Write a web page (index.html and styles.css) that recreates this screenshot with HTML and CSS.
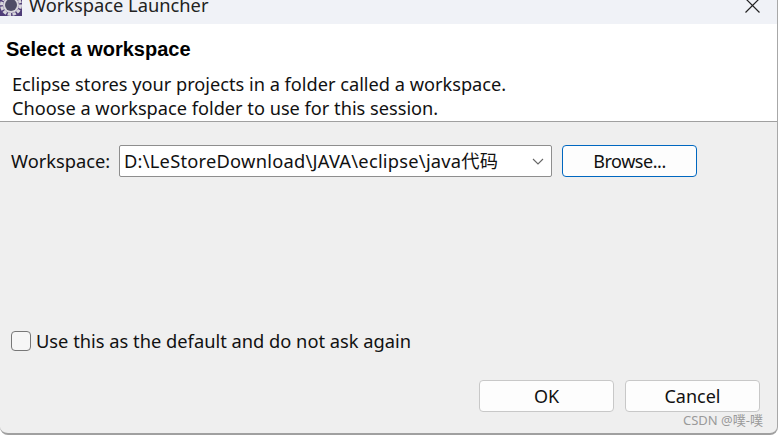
FILE: index.html
```html
<!DOCTYPE html>
<html lang="en">
<head>
    <meta charset="UTF-8">
    <title>Workspace Launcher</title>
    <link rel="stylesheet" href="styles.css">
</head>
<body>
    <div class="window">
        <div class="titlebar">
            <svg class="app-icon" width="22" height="22" viewBox="0 0 22 22">
                <rect width="22" height="22" fill="#4f3d78"/>
                <circle cx="11" cy="11" r="9.5" fill="none" stroke="#d8d6dc" stroke-width="3" stroke-dasharray="3.5 1.4"/>
                <circle cx="11" cy="11" r="8" fill="#d8d6dc"/>
                <circle cx="11" cy="11" r="6" fill="#4f4d66"/>
            </svg>
            <span class="title">Workspace Launcher</span>
            <svg class="close" width="15" height="15" viewBox="0 0 15 15">
                <path d="M0.5 0.5 L14.5 14.5 M14.5 0.5 L0.5 14.5" stroke="#222" stroke-width="1.2" fill="none"/>
            </svg>
        </div>

        <div class="banner">
            <h1>Select a workspace</h1>
            <p>Eclipse stores your projects in a folder called a workspace.<br>Choose a workspace folder to use for this session.</p>
        </div>

        <div class="body">
            <div class="row">
                <label class="label">Workspace:</label>
                <div class="combo">
                    <span class="path">D:\LeStoreDownload\JAVA\eclipse\java代码</span>
                    <svg width="12" height="7" viewBox="0 0 12 7">
                        <path d="M1 1 L6 6 L11 1" stroke="#666" stroke-width="1.1" fill="none"/>
                    </svg>
                </div>
                <button class="btn btn-focus">Browse...</button>
            </div>

            <div class="check-row">
                <span class="checkbox"></span>
                <span>Use this as the default and do not ask again</span>
            </div>

            <div class="actions">
                <button class="btn">OK</button>
                <button class="btn">Cancel</button>
            </div>
            <span class="watermark">CSDN @噗-噗</span>
        </div>
    </div>
</body>
</html>
```

FILE: styles.css
```css
html, body {
    margin: 0;
    padding: 0;
    height: 100%;
    background-color: #fff;
    overflow: hidden;
}

body {
    font-family: "Noto Sans", "Noto Sans CJK SC", sans-serif;
    font-size: 18.3px;
    line-height: 24px;
    color: #111;
}

.window {
    width: 778px;
    height: 435px;
    box-sizing: border-box;
    display: flex;
    flex-direction: column;
    background-color: #efefef;
    border-right: 1px solid #a8a8a8;
    border-bottom: 2px solid #a0a0a0;
    border-radius: 0 0 8px 8px;
    overflow: hidden;
}

.titlebar {
    height: 24px;
    flex: none;
    display: flex;
    align-items: flex-end;
    padding: 0 17px 7px 0;
    box-sizing: border-box;
    background-color: #f0f2f7;
    overflow: hidden;
    color: #222;
}

.app-icon {
    flex: none;
    margin-right: 7px;
    margin-bottom: 1px;
}

.title {
    flex: 1;
}

.close {
    flex: none;
    margin-bottom: 4px;
}

.banner {
    height: 98px;
    flex: none;
    box-sizing: border-box;
    padding: 14px 0 0 6px;
    background-color: #fff;
    border-bottom: 1px solid #a0a0a0;
}

.banner h1 {
    margin: 0 0 12px 0;
    font-family: "Liberation Sans", sans-serif;
    font-size: 20px;
    font-weight: bold;
    line-height: 22px;
    color: #000;
}

.banner p {
    margin: 0 0 0 6px;
    font-size: 18.2px;
}

.body {
    flex: 1;
    position: relative;
    display: flex;
    flex-direction: column;
    padding: 23px 17px 0 11px;
}

.row {
    display: flex;
    align-items: center;
    gap: 8px;
}

.label {
    flex: none;
    width: 100px;
}

.combo {
    width: 433px;
    height: 32px;
    box-sizing: border-box;
    margin-right: 2px;
    display: flex;
    align-items: center;
    justify-content: space-between;
    padding: 0 7px 0 4px;
    background-color: #fff;
    border: 1px solid #8e8e8e;
    border-radius: 2px;
}

.path {
    letter-spacing: 0.24px;
    white-space: nowrap;
}

.btn {
    width: 135px;
    height: 32px;
    box-sizing: border-box;
    padding: 0;
    font-family: inherit;
    font-size: 18px;
    color: #111;
    background-color: #fdfdfd;
    border: 1px solid #c8c8c8;
    border-radius: 4px;
}

.btn-focus {
    letter-spacing: -0.45px;
    border-color: #0067c0;
}

.check-row {
    display: flex;
    align-items: center;
    gap: 5px;
    margin-top: 152px;
}

.checkbox {
    width: 20px;
    height: 20px;
    box-sizing: border-box;
    border: 1px solid #777;
    border-radius: 4px;
    background-color: #f6f6f6;
}

.actions {
    display: flex;
    justify-content: flex-end;
    gap: 11px;
    margin-top: 27px;
}

.watermark {
    position: absolute;
    right: 14px;
    bottom: 4px;
    font-size: 13px;
    line-height: 18px;
    color: #9a9a9a;
}
```
